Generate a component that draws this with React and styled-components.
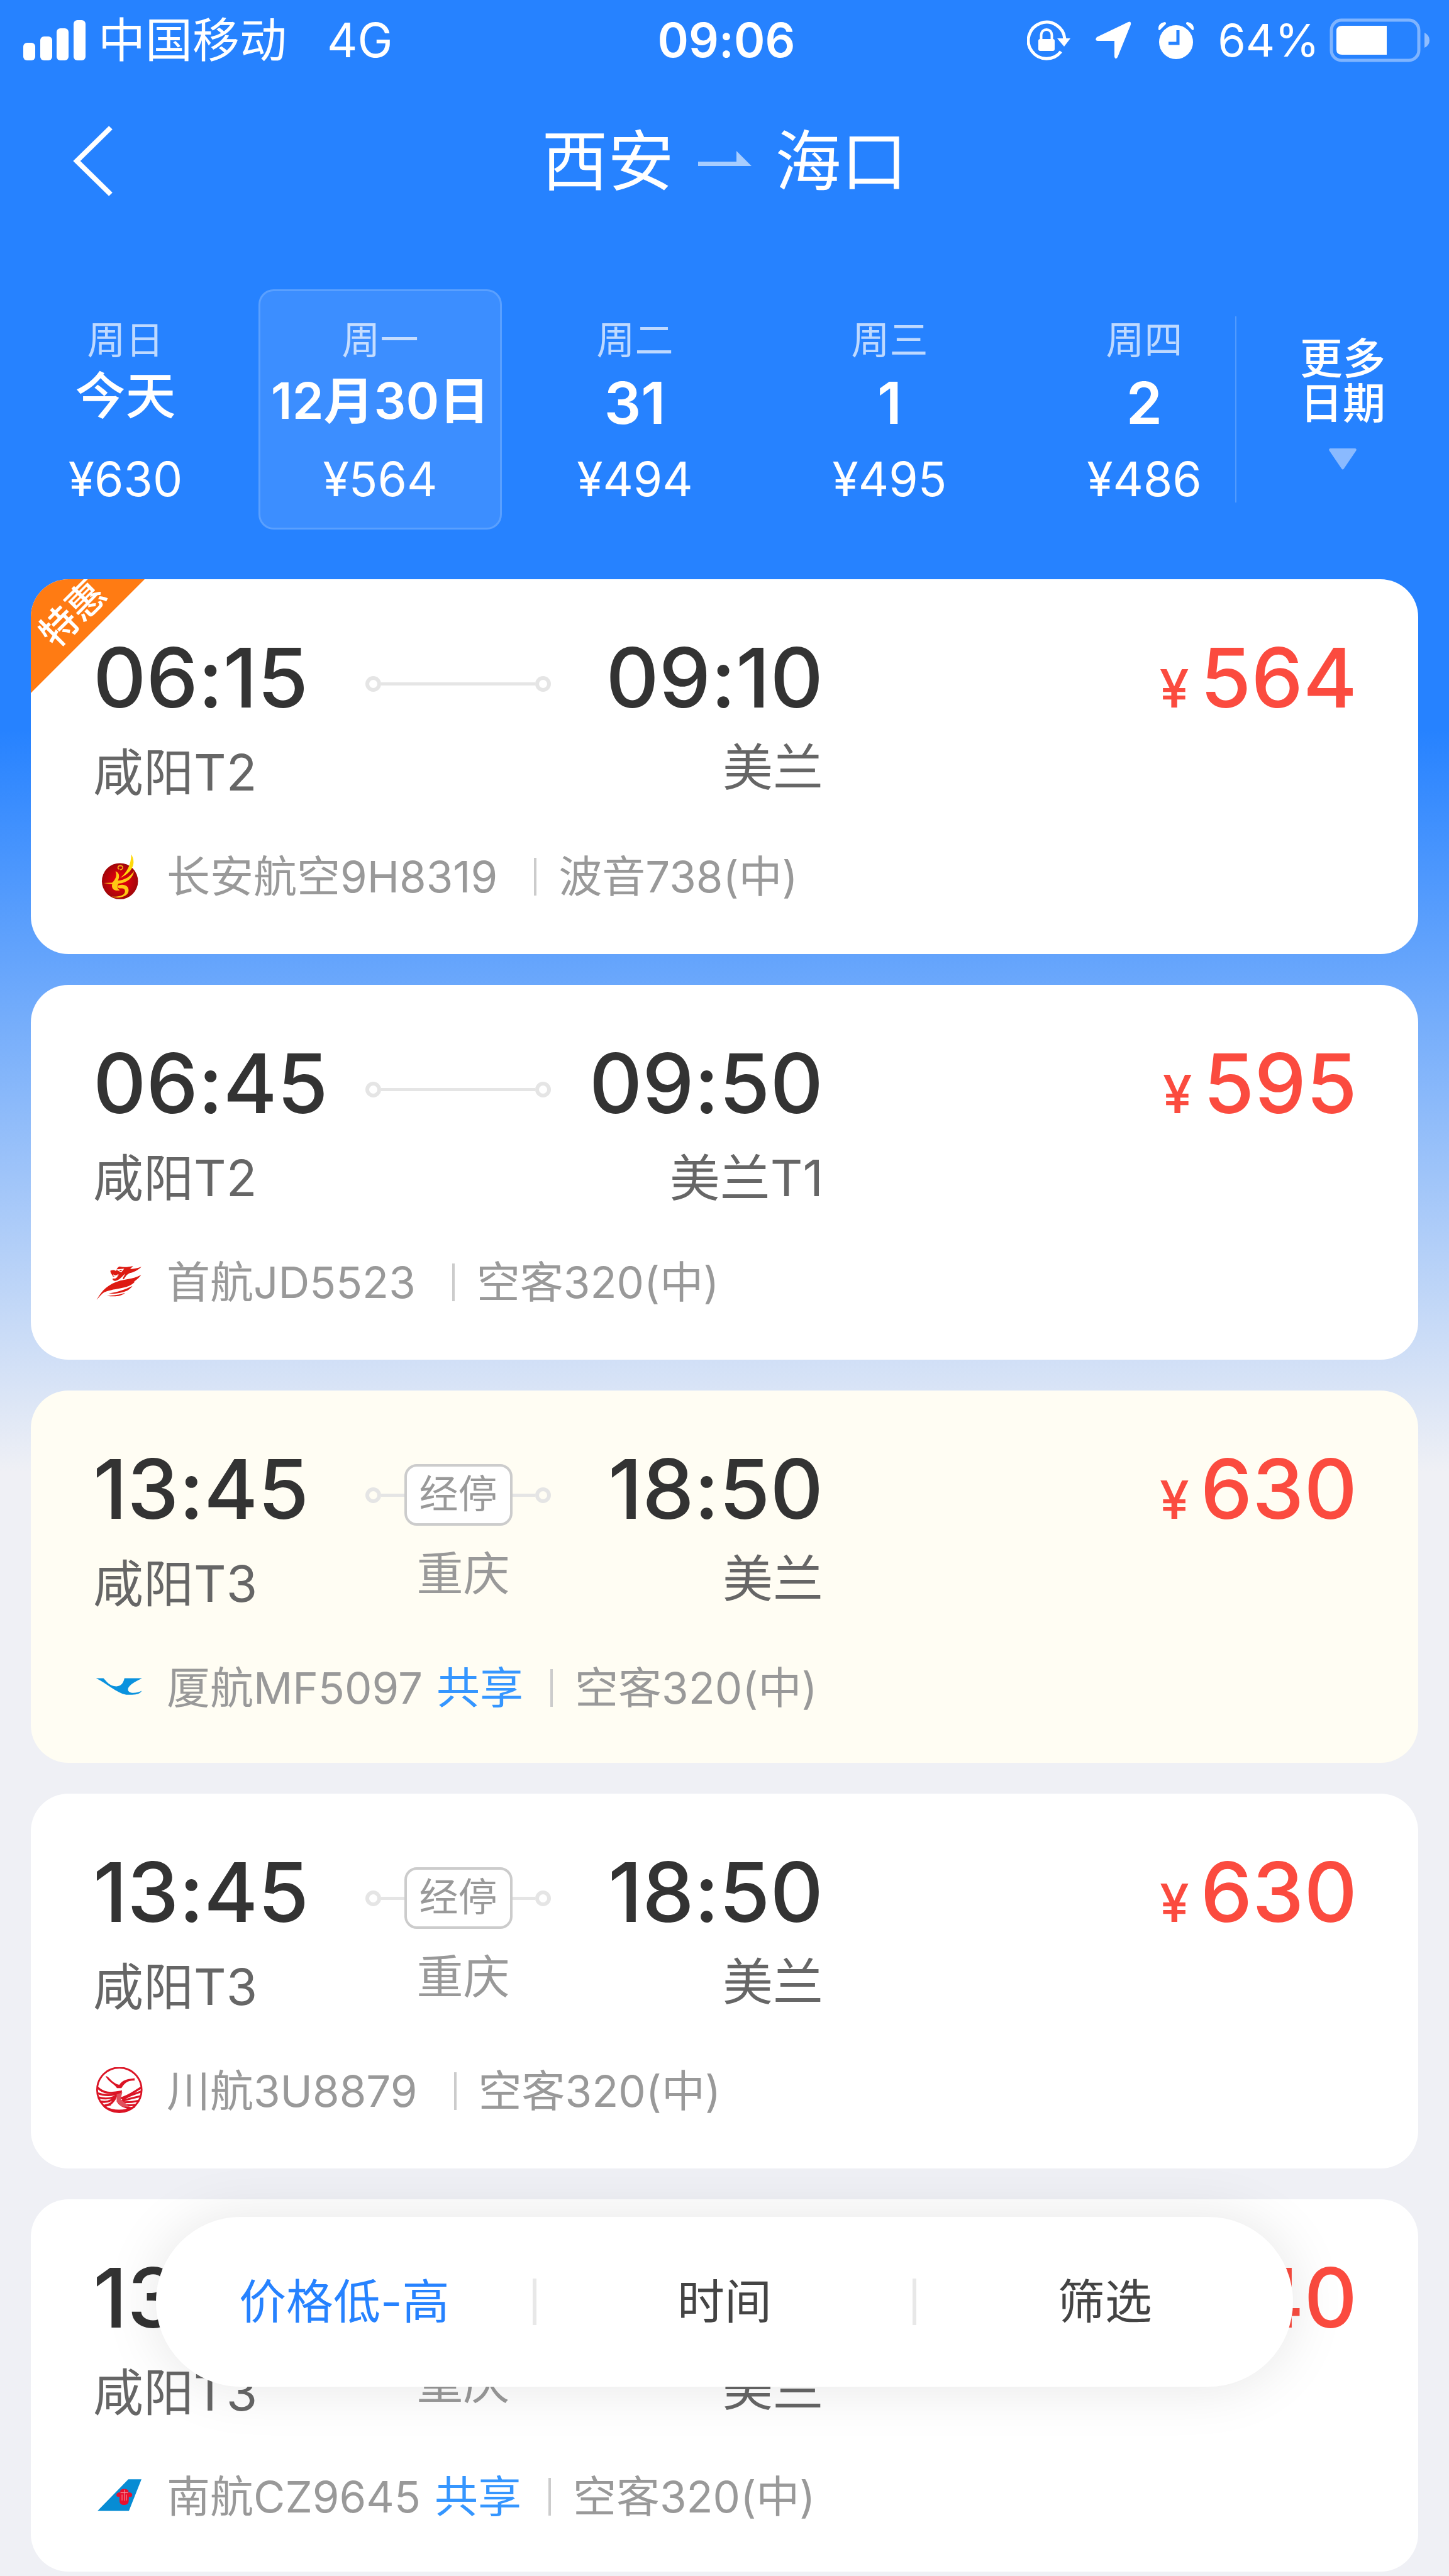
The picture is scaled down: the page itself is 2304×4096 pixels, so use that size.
import React, { useState } from 'react'
import styled, { createGlobalStyle } from 'styled-components'

const GlobalStyle = createGlobalStyle`
  *,
  *::before,
  *::after {
    box-sizing: border-box;
  }
  body {
    margin: 0;
    font-family: Inter, "Noto Sans CJK SC", sans-serif;
    font-feature-settings: "calt" 0;
    line-height: 1.2;
    background: #eff0f5;
  }
  button {
    font: inherit;
    color: inherit;
    border: 0;
    padding: 0;
    background: none;
    cursor: pointer;
  }
`
const Page = styled.div`
  min-height: 100vh;
  padding-bottom: 8px;
  background: linear-gradient(to bottom, #2682ff 1160px, #eff0f5 2340px);
`

/* ---------- status bar ---------- */
const StatusBar = styled.div`
  display: grid;
  grid-template-columns: 1fr auto 1fr;
  align-items: center;
  height: 128px;
  padding: 0 31px 0 37px;
  font-size: 72px;
  color: #fff;
`
const StatusLeft = styled.div`
  display: flex;
  align-items: center;
  font-size: 75px;
  .carrier {
    margin: 0 64px 0 20px;
  }
`
const Clock = styled.time`
  font-size: 75px;
  font-weight: 600;
`
const StatusRight = styled.div`
  display: flex;
  align-items: center;
  justify-content: flex-end;
  .location {
    margin: 0 42px 0 40px;
  }
  .percent {
    margin: 0 16px 0 37px;
  }
`

/* ---------- title and dates ---------- */
const NavBar = styled.header`
  display: grid;
  grid-template-columns: 1fr auto 1fr;
  align-items: center;
  height: 256px;
  padding: 0 112px;
  color: #fff;
`
const BackButton = styled.button`
  display: flex;
  justify-self: start;
`
const Title = styled.h1`
  display: flex;
  align-items: center;
  gap: 38px;
  margin: 0;
  font-size: 105px;
  font-weight: 400;
`
const Dates = styled.nav`
  display: flex;
  align-items: stretch;
  margin: 76px 0 79px;
  color: #fff;
`
const DayList = styled.div`
  display: flex;
  flex: 1;
  gap: 18px;
  min-width: 0;
  padding-left: 6px;
  overflow: hidden;
`
const Day = styled.button`
  display: flex;
  flex-direction: column;
  align-items: center;
  flex: 0 0 387px;
  height: 382px;
  padding: 42px 0 37px;
  border: 3px solid ${props => props.$active ? 'rgba(255,255,255,.16)' : 'transparent'};
  border-radius: 24px;
  background: ${props => props.$active ? 'rgba(255,255,255,.1)' : 'none'};
  white-space: nowrap;
`
const Weekday = styled.span`
  font-size: 61px;
  line-height: 72px;
  opacity: .7;
`
const DayName = styled.span`
  margin-top: 12px;
  font-size: ${props => props.$big ? 92 : 80}px;
  font-weight: ${props => props.$plain ? 500 : 600};
  line-height: ${props => props.$plain ? 80 : props.$big ? 104 : 96}px;
`
const DayPrice = styled.span`
  margin-top: auto;
  font-size: 75px;
  line-height: 80px;
`
const Divider = styled.span`
  align-self: center;
  flex: none;
  width: ${props => props.$width || 4}px;
  height: ${props => props.$height}px;
  background: ${props => props.$color};
`
const MoreDates = styled.button`
  display: flex;
  flex-direction: column;
  align-items: center;
  flex: 0 0 338px;
  padding-top: 75px;
  font-size: 68px;
  font-weight: 500;
  line-height: 71px;
  svg {
    margin-top: 36px;
  }
`

/* ---------- flight cards ---------- */
const FlightList = styled.main`
  display: flex;
  flex-direction: column;
  gap: 49px;
  padding: 0 49px;
`
const Card = styled.article`
  position: relative;
  padding: 87px 97px ${props => props.$shared ? 79 : 83}px 99px;
  border-radius: 60px;
  background: ${props => props.$tinted ? '#fffdf3' : '#fff'};
  overflow: hidden;
`
const Ribbon = styled.span`
  position: absolute;
  top: 0;
  left: 0;
  width: 181px;
  height: 181px;
  background: #ff7b13;
  clip-path: polygon(0 0, 100% 0, 0 100%);
  color: #fff;
  span {
    position: absolute;
    top: 18px;
    left: -34px;
    width: 200px;
    text-align: center;
    font-size: 60px;
    font-weight: 500;
    line-height: 72px;
    transform: rotate(-45deg);
  }
`
const Trip = styled.div`
  display: flex;
  align-items: flex-start;
`
const Endpoint = styled.div`
  display: flex;
  flex-direction: column;
  gap: 40px;
  width: 433px;
  text-align: ${props => props.$end ? 'right' : 'left'};
`
const Time = styled.time`
  font-size: 131px;
  font-weight: 500;
  line-height: 140px;
  color: #333;
`
const Airport = styled.span`
  font-size: 80px;
  line-height: ${props => props.$plain ? 64 : 80}px;
  color: #666;
`
const Route = styled.div`
  display: flex;
  flex-direction: column;
  align-items: center;
  gap: 39px;
  width: 295px;
  padding-top: 30px;
`
const RouteLine = styled.div`
  display: flex;
  align-items: center;
  width: 100%;
  height: 98px;
  &::before,
  &::after {
    content: '';
    width: 25px;
    height: 25px;
    border: 6px solid #e5e5e5;
    border-radius: 50%;
  }
`
const Track = styled.span`
  flex: 1;
  height: 5px;
  background: #e5e5e5;
`
const StopTag = styled.span`
  height: 98px;
  padding: 0 20px;
  border: 4px solid #ccc;
  border-radius: 20px;
  background: #fff;
  font-size: 62px;
  line-height: 88px;
  color: #999;
`
const StopCity = styled.span`
  padding-left: 16px;
  font-size: 74px;
  line-height: 74px;
  color: #999;
`
const Price = styled.div`
  display: flex;
  align-items: baseline;
  justify-content: flex-end;
  flex: 1;
  gap: 18px;
  font-size: 131px;
  font-weight: 500;
  line-height: 140px;
  color: #fb4b3f;
  small {
    font-size: 84px;
    font-weight: 500;
  }
`
const Airline = styled.div`
  display: flex;
  align-items: center;
  height: 80px;
  margin-top: 86px;
  padding-left: 4px;
  font-size: 69px;
  line-height: 80px;
  color: #999;
  svg {
    margin-right: 37px;
  }
`
const Shared = styled.span`
  margin-left: 22px;
  color: #3596ff;
`
const Aircraft = styled.span`
  display: flex;
  gap: 35px;
  margin-left: ${props => props.$shared ? 43 : 58}px;
`

/* ---------- sort bar ---------- */
const SortBar = styled.div`
  position: fixed;
  right: 248px;
  bottom: 301px;
  left: 248px;
  display: flex;
  height: 270px;
  border-radius: 135px;
  background: #fff;
  box-shadow: 0 0 90px rgba(0, 0, 0, .1);
`
const SortButton = styled.button`
  flex: 1;
  font-size: 75px;
  color: ${props => props.$active ? '#2682ff' : '#444'};
`

/* ---------- icons ---------- */
const SignalIcon = () => (
  <svg width="99" height="64" viewBox="0 0 99 64" fill="#fff">
    <rect x="0" y="36" width="19" height="28" rx="6" />
    <rect x="27" y="26" width="19" height="38" rx="6" />
    <rect x="53" y="13" width="19" height="51" rx="6" />
    <rect x="80" y="0" width="19" height="64" rx="6" />
  </svg>
)
const LockIcon = () => (
  <svg width="69" height="64" viewBox="0 0 69 64" fill="none">
    <path d="M54 50A29 29 0 1 1 60 30" stroke="#fff" strokeWidth="5" />
    <path d="M48 29h21L59 42z" fill="#fff" />
    <rect x="18" y="30" width="26" height="19" rx="3" fill="#fff" />
    <path d="M22.500 32v-8.500a8.500 8.500 0 0 1 17 0V32" stroke="#fff" strokeWidth="4" />
  </svg>
)
const LocationIcon = () => (
  <svg className="location" width="57" height="60" viewBox="0 0 57 60" fill="#fff">
    <path d="M52 1Q57-1 56 5L35 57q-4 5-5-1V31H3q-5-1-1-6z" />
  </svg>
)
const AlarmIcon = () => (
  <svg width="58" height="60" viewBox="0 0 58 60">
    <circle cx="29" cy="33" r="27" fill="#fff" />
    <path d="M1 13Q0 3 11 1q2 0 2 3L4 13q-2 2-3 0zM57 13Q58 3 47 1q-2 0-2 3l9 9q2 2 3 0z" fill="#fff" />
    <path d="M32 14v21H17" fill="none" stroke="#2682ff" strokeWidth="5" />
  </svg>
)
const BatteryIcon = () => (
  <svg width="159" height="70" viewBox="0 0 159 70">
    <rect x="3" y="3" width="139" height="64" rx="16" fill="none" stroke="#7fb4ff" strokeWidth="5" />
    <path d="M20 12h71v46H20q-9 0-9-8V20q0-8 9-8z" fill="#fff" />
    <path d="M151 23q8 4 8 12t-8 12z" fill="#8fbdff" />
  </svg>
)
const BackIcon = () => (
  <svg width="72" height="112" viewBox="0 0 72 112" fill="none">
    <path d="M64 3L10 56l54 53" stroke="#fff" strokeWidth="8" />
  </svg>
)
const RouteArrow = () => (
  <svg width="85" height="36" viewBox="0 0 85 36" fill="#a8cdff">
    <path d="M0 19h61V2l24 24H0z" />
  </svg>
)
const MoreArrow = () => (
  <svg width="44" height="34" viewBox="0 0 44 34" fill="#8abaff">
    <path d="M2 0h40q3 1 1 4L24 32q-2 3-4 0L1 4q-2-3 1-4z" />
  </svg>
)

const logoSize = { width: 76, height: 76 }
const ChanganLogo = () => (
  <svg {...logoSize} viewBox="105 80 320 320">
    <defs>
      <radialGradient id="changan">
        <stop offset="0.400" stopColor="#d8000c" />
        <stop offset="1" stopColor="#a00609" />
      </radialGradient>
    </defs>
    <circle cx="268" cy="270" r="121" fill="url(#changan)" />
    <path d="M344 90c34 58 12 118-74 158 46-38 72-88 74-158z" fill="#ffd90a" />
    <path d="M362 202c-6 46-46 80-104 84-10 18-10 34 10 44-36 10-60-10-52-40l-58-8 58-2c24-24 34-48 22-76 20 4 34 30 16 62 48-4 82-26 108-64z" fill="#ffc814" />
    <path d="M258 298c36-12 70 2 68 36-3 36-52 56-116 40 60 2 94-12 92-38-1-18-16-20-36-18-14-2-16-12-8-20z" fill="#ffc814" />
    <path d="M270 194c22-4 22-26 2-28-20 0-22 20-8 24" fill="none" stroke="#f5b316" strokeWidth="7" />
  </svg>
)
const CapitalLogo = () => (
  <svg {...logoSize} viewBox="105 102 320 320" fill="#dd1a12">
    <path d="M112 380c34-66 80-108 158-130 46-10 90-12 140-38-20 26-38 40-60 52-64 22-136 20-184 60-20 16-38 36-54 56z" />
    <path d="M152 334c62-62 132-50 216-78-14 26-60 40-98 46-46 8-80 14-118 32zM192 336c62-8 110-26 160-50-20 28-48 40-84 46-28 6-50 8-76 4zM180 352c50-4 82-6 122-20-26 24-70 28-122 20z" />
    <path d="M204 184c16-8 30-4 38 2 4-16 12-26 24-30 34 8 60 2 90-4l-20 22c26-2 50-6 76-16-28 26-50 36-78 42-22 10-30 26-40 42l-8-6 18-32c-26 20-34 42-68 48-14 0-22-12-14-16 20 4 24-6 32-14-12-4-22-2-32 2-8-18-18-22-18-40z" />
    <path d="M250 178l40-4-14 18zM222 212q18 14 36-2" fill="none" stroke="#fff" strokeWidth="6" />
  </svg>
)
const XiamenLogo = () => (
  <svg {...logoSize} viewBox="105 110 320 320" fill="#0a92de">
    <path d="M108 205h50c20 20 40 54 86 54 34 0 48-26 54-54h118c-34 18-92 44-94 74-1 26 44 32 92 10-10 18-30 26-64 26h-40c-66-10-132-78-202-110z" />
  </svg>
)
const SichuanLogo = () => (
  <svg {...logoSize} viewBox="105 68 320 320" fill="none" stroke="#db1425">
    <circle cx="264" cy="220" r="149" strokeWidth="12" />
    <path d="M172 128c22-2 26 28 76 54l16 4c20-34 64-40 102-44v16c-40-4-66 12-88 50h-30c-12-24-58-42-76-80z" fill="#db1425" stroke="none" />
    <path d="M118 204c40 40 88 42 156 28-2 20-14 32-4 44 50-8 94-46 142-72" strokeWidth="14" />
    <path d="M120 242q64 26 148 0M126 270q68 22 134-20M142 298q60 12 106-42M164 324q50 0 76-56M412 230q-66 20-130 54M406 262q-62 14-126 32M396 292q-60 14-130 10M370 320q-60 10-112-12M350 340q-66 4-98-44" strokeWidth="13" />
    <path d="M166 330q20-10 42-12M164 334q98 50 204-2" strokeWidth="12" />
    <path d="M246 250l38-14-12 46 60 50h-50l-36-34z" fill="#e0505c" stroke="none" />
  </svg>
)
const SouthernLogo = () => (
  <svg {...logoSize} viewBox="105 145 320 320">
    <path d="M324 188h88l-84 212H118z" fill="#078cd4" />
    <path d="M270 262l10-6 16-4 18 4 12 8-2 12c16 0 28 6 26 18-2 14-14 16-22 10l-2 38q-10 20-32 18-22 0-28-18l-2-38c-12 4-20-2-20-12 2-12 14-18 26-16z" fill="#e8102e" />
    <path d="M272 278h50M282 290v40M297 258v74M312 290v40" stroke="#f3a0a8" strokeWidth="4" />
  </svg>
)

const days = [
  { week: '周日', name: '今天', price: 630 },
  { week: '周一', name: '12月30日', price: 564 },
  { week: '周二', name: '31', price: 494 },
  { week: '周三', name: '1', price: 495 },
  { week: '周四', name: '2', price: 486 },
]
const flights = [
  { Logo: ChanganLogo, no: '长安航空9H8319', plane: '波音738(中)', dep: '06:15', arr: '09:10', from: '咸阳T2', to: '美兰', price: 564, deal: true },
  { Logo: CapitalLogo, no: '首航JD5523', plane: '空客320(中)', dep: '06:45', arr: '09:50', from: '咸阳T2', to: '美兰T1', price: 595 },
  { Logo: XiamenLogo, no: '厦航MF5097', plane: '空客320(中)', dep: '13:45', arr: '18:50', from: '咸阳T3', to: '美兰', stop: '重庆', price: 630, shared: true, tinted: true },
  { Logo: SichuanLogo, no: '川航3U8879', plane: '空客320(中)', dep: '13:45', arr: '18:50', from: '咸阳T3', to: '美兰', stop: '重庆', price: 630 },
  { Logo: SouthernLogo, no: '南航CZ9645', plane: '空客320(中)', dep: '13:45', arr: '18:50', from: '咸阳T3', to: '美兰', stop: '重庆', price: 640, shared: true },
]
const sorts = ['价格低-高', '时间', '筛选']

// lines of Chinese only are set tighter than lines with digits or letters
const isPlain = (text) => !/[0-9A-Z]/.test(text)

function Flight({ flight }) {
  const { Logo } = flight
  return (
    <Card $shared={flight.shared} $tinted={flight.tinted}>
      {flight.deal && <Ribbon><span>特惠</span></Ribbon>}
      <Trip>
        <Endpoint>
          <Time>{flight.dep}</Time>
          <Airport $plain={isPlain(flight.from)}>{flight.from}</Airport>
        </Endpoint>
        <Route>
          <RouteLine>
            <Track />
            {flight.stop && <><StopTag>经停</StopTag><Track /></>}
          </RouteLine>
          {flight.stop && <StopCity>{flight.stop}</StopCity>}
        </Route>
        <Endpoint $end>
          <Time>{flight.arr}</Time>
          <Airport $plain={isPlain(flight.to)}>{flight.to}</Airport>
        </Endpoint>
        <Price><small>¥</small>{flight.price}</Price>
      </Trip>
      <Airline>
        <Logo />
        <span>{flight.no}</span>
        {flight.shared && <Shared>共享</Shared>}
        <Aircraft $shared={flight.shared}>
          <Divider $height={60} $color="#ccc" />
          {flight.plane}
        </Aircraft>
      </Airline>
    </Card>
  )
}

function App() {
  const [day, setDay] = useState(1)
  const [sort, setSort] = useState(0)

  return (
    <Page>
      <GlobalStyle />
      <StatusBar>
        <StatusLeft>
          <SignalIcon />
          <span className="carrier">中国移动</span>
          <span>4G</span>
        </StatusLeft>
        <Clock>09:06</Clock>
        <StatusRight>
          <LockIcon />
          <LocationIcon />
          <AlarmIcon />
          <span className="percent">64%</span>
          <BatteryIcon />
        </StatusRight>
      </StatusBar>
      <NavBar>
        <BackButton aria-label="返回"><BackIcon /></BackButton>
        <Title>西安<RouteArrow />海口</Title>
      </NavBar>
      <Dates>
        <DayList>
          {days.map((item, index) => (
            <Day key={item.week} $active={index === day} onClick={() => setDay(index)}>
              <Weekday>{item.week}</Weekday>
              <DayName $big={item.name.length < 3 && !isPlain(item.name)} $plain={isPlain(item.name)}>{item.name}</DayName>
              <DayPrice>¥{item.price}</DayPrice>
            </Day>
          ))}
        </DayList>
        <Divider $width={2} $height={296} $color="rgba(255,255,255,.2)" />
        <MoreDates>
          <span>更多</span>
          <span>日期</span>
          <MoreArrow />
        </MoreDates>
      </Dates>
      <FlightList>
        {flights.map(flight => <Flight key={flight.no} flight={flight} />)}
      </FlightList>
      <SortBar>
        {sorts.map((name, index) => (
          <React.Fragment key={name}>
            {index > 0 && <Divider $width={6} $height={74} $color="#e8e8e8" />}
            <SortButton $active={index === sort} onClick={() => setSort(index)}>{name}</SortButton>
          </React.Fragment>
        ))}
      </SortBar>
    </Page>
  )
}

export default App
